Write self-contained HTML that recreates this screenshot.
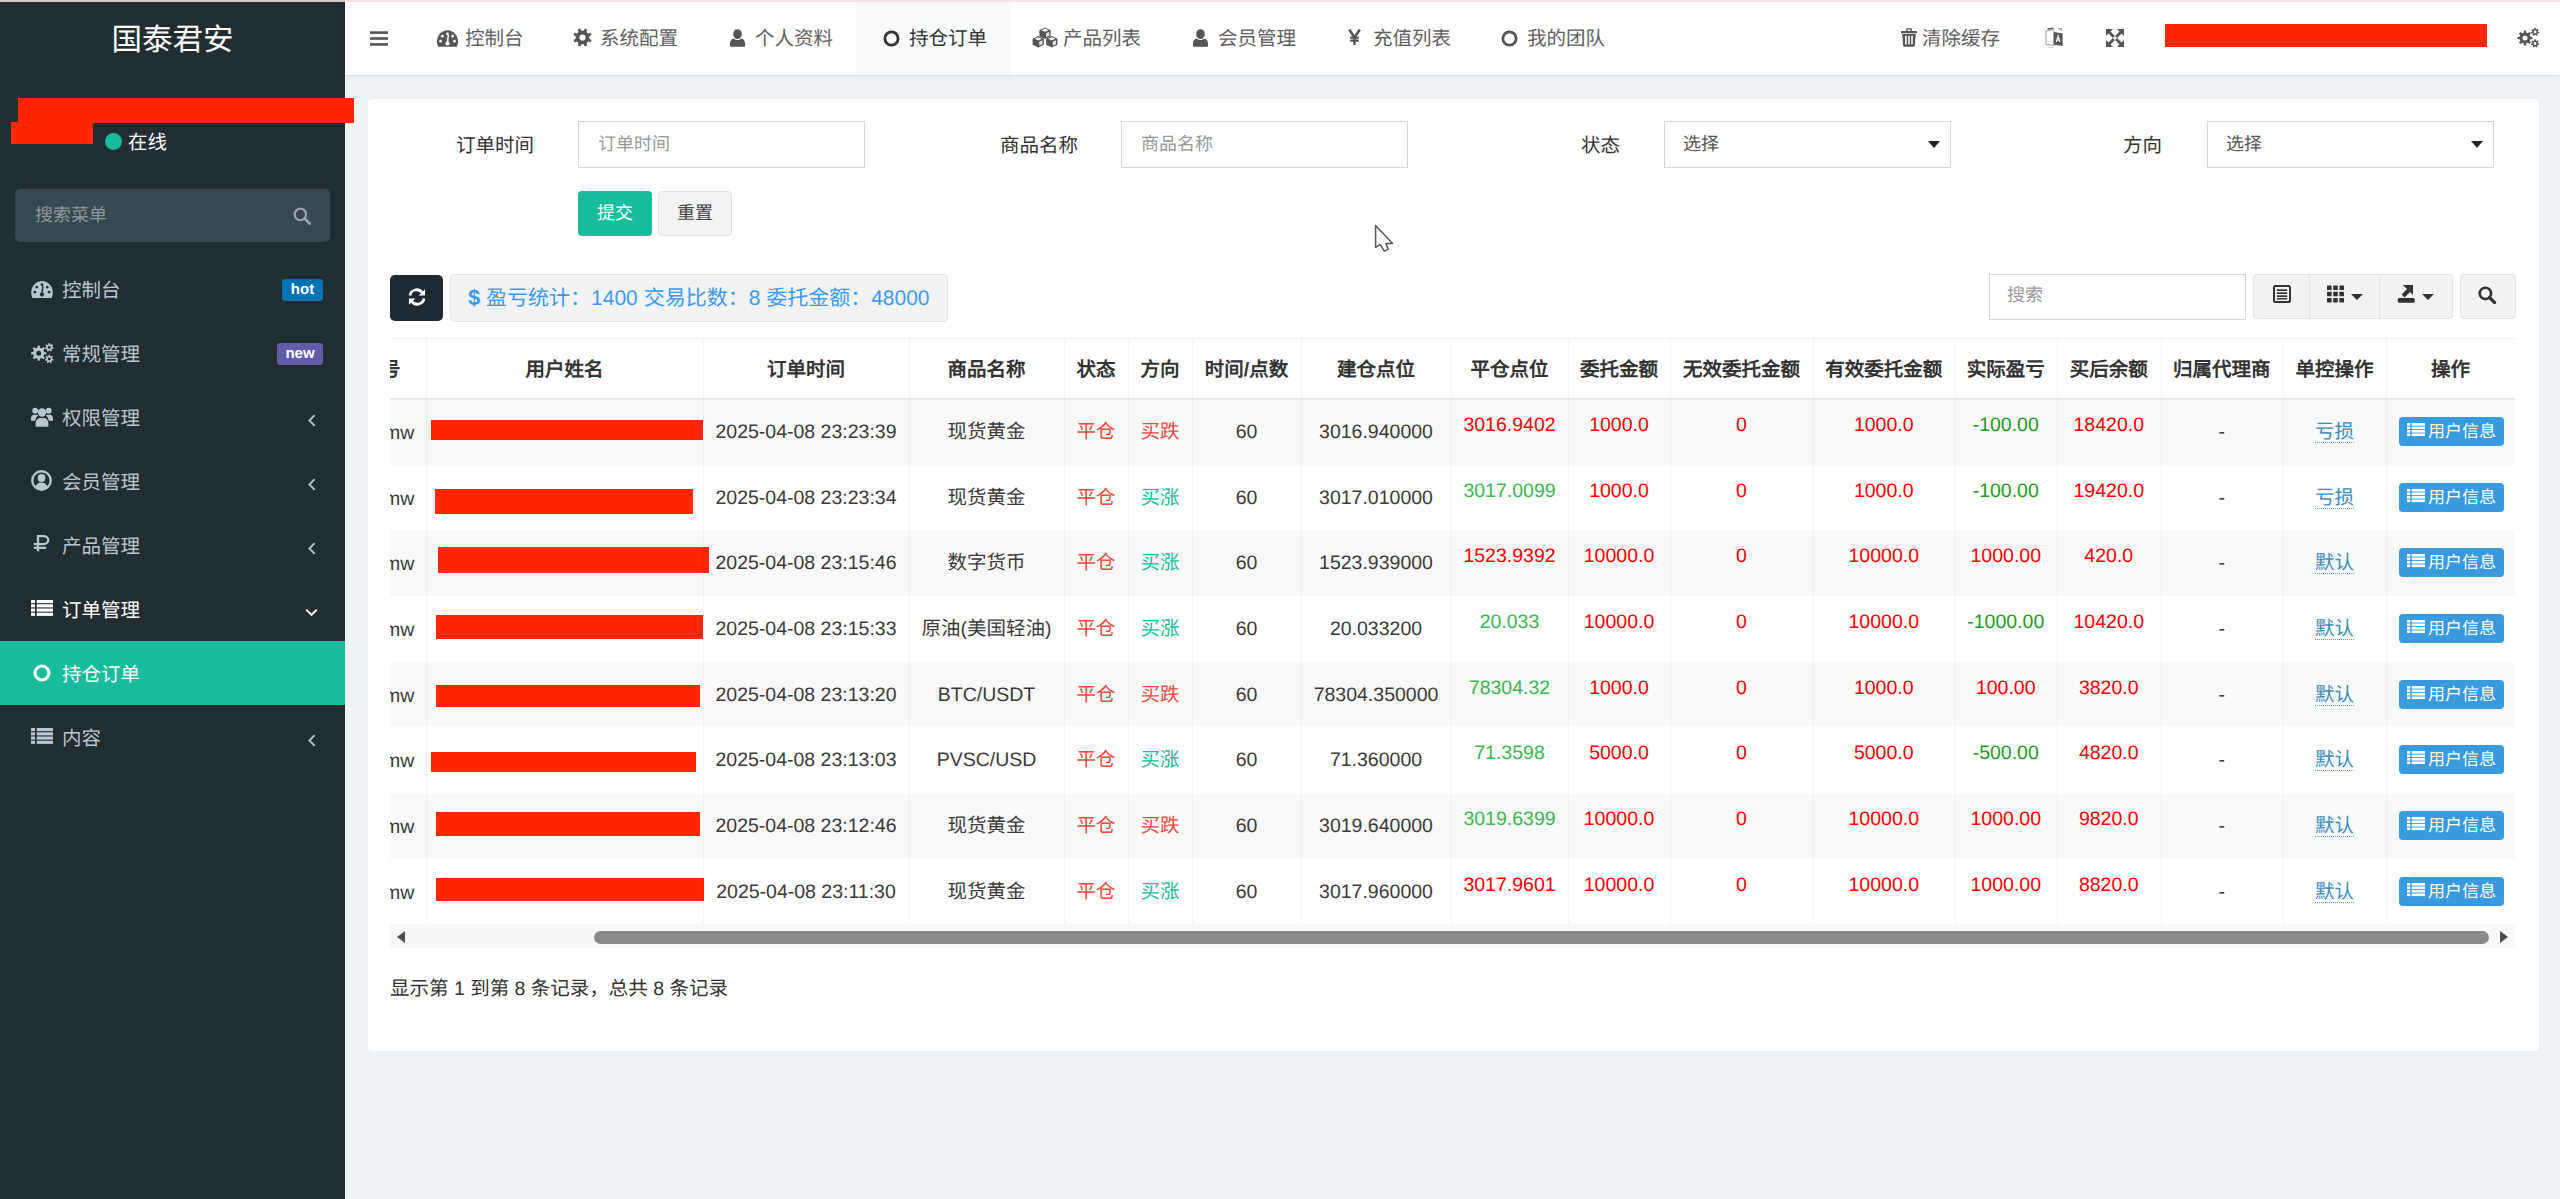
<!DOCTYPE html>
<html lang="zh-CN">
<head>
<meta charset="utf-8">
<style>
*{box-sizing:border-box}
html,body{margin:0;padding:0}
body{width:2560px;height:1199px;overflow:hidden;position:relative;background:#eff3f6;font-family:"Liberation Sans",sans-serif;color:#333;text-rendering:geometricPrecision}
.a{position:absolute;white-space:nowrap}
svg{display:block}
.mt{font-size:19.5px;color:#b8c7ce;line-height:26px}
.nv{font-size:19.5px;color:#606060;line-height:26px}
.lbl{font-size:19.5px;color:#333;line-height:26px}
.inp{background:#fff;border:1px solid #d2d6de}
.ph{font-size:18px;color:#999;line-height:26px}
.btn{font-size:18px;line-height:43px;text-align:center}
.stat{font-size:21px;color:#3a9af2;line-height:26px}
.th{font-size:19.5px;font-weight:bold;color:#333;line-height:26px}
.td{font-size:19.5px;color:#3a3a3a;line-height:26px}
.lnk{color:#3c8dbc}
.lnk span{display:inline-block;line-height:20px;border-bottom:1.5px dotted #5aa0d0}
.ubtn{width:105px;height:29px;background:#3a9ade;border-radius:4px;color:#fff;font-size:17px;line-height:29px;padding-left:8px}
.foot{font-size:19.5px;color:#333;line-height:26px}
</style>
</head>
<body>
<div class="a" style="left:0;top:0;width:345px;height:1199px;background:#222d32"></div>
<div class="a" style="left:0;top:0;width:2560px;height:2px;background:#f6e3e3;z-index:5"></div>
<div class="a" style="left:0;top:0;width:345px;height:2px;background:#d6c8c6;z-index:6"></div>
<div class="a" style="left:0;top:20px;width:345px;line-height:40px;text-align:center;color:#fff;font-size:30.5px">国泰君安</div>
<div class="a" style="left:18px;top:98px;width:336px;height:25px;background:#ff2600;z-index:3"></div>
<div class="a" style="left:11px;top:122px;width:82px;height:22px;background:#ff2600"></div>
<div class="a" style="left:105px;top:133px;width:17px;height:17px;border-radius:50%;background:#18bc9c"></div>
<div class="a mt" style="left:128px;top:129.5px;color:#fff">在线</div>
<div class="a" style="left:15px;top:189px;width:315px;height:53px;border-radius:5px;background:#374850"></div>
<div class="a" style="left:35px;top:202px;line-height:26px;font-size:18px;color:#8d979b">搜索菜单</div>
<svg class="a" style="left:293px;top:207px" width="18" height="18" viewBox="0 0 18 18"><circle cx="7.4" cy="7.4" r="5.7" fill="none" stroke="#9aa3a7" stroke-width="2.2"/><path d="M11.6 11.6L16.6 16.6" stroke="#9aa3a7" stroke-width="2.8000000000000003" stroke-linecap="round"/></svg>
<svg class="a" style="left:31px;top:281px" width="22" height="17" viewBox="0 0 21.2 16.7"><path d="M1.2 16.7C.5 15.2 0 13.4 0 11.4 0 5.1 4.7 0 10.6 0S21.2 5.1 21.2 11.4c0 2-.5 3.8-1.2 5.3z" fill="#b8c7ce"/><g fill="#222d32"><circle cx="3.6" cy="11" r="1.35"/><circle cx="5.4" cy="6" r="1.35"/><circle cx="10.6" cy="3.6" r="1.35"/><circle cx="15.8" cy="6" r="1.35"/><circle cx="17.6" cy="11" r="1.35"/><circle cx="10.6" cy="13.3" r="2.1"/></g><path d="M11.4 4.8L10.6 13" stroke="#222d32" stroke-width="1.5"/></svg>
<div class="a mt" style="left:62px;top:calc(257px + 20.5px);color:#b8c7ce">控制台</div>
<div class="a" style="left:282px;top:279px;width:41px;height:22px;border-radius:3px;background:#0073b7;color:#fff;font-size:15px;font-weight:bold;line-height:22px;text-align:center">hot</div>
<svg class="a" style="left:31px;top:343px" width="23" height="21" viewBox="0 0 23 21"><path fill-rule="evenodd" d="M13.16 8.94L15.33 9.17L15.33 11.23L13.16 11.46L12.45 13.16L13.82 14.87L12.37 16.32L10.66 14.95L8.96 15.66L8.73 17.83L6.67 17.83L6.44 15.66L4.74 14.95L3.03 16.32L1.58 14.87L2.95 13.16L2.24 11.46L0.07 11.23L0.07 9.17L2.24 8.94L2.95 7.24L1.58 5.53L3.03 4.08L4.74 5.45L6.44 4.74L6.67 2.57L8.73 2.57L8.96 4.74L10.66 5.45L12.37 4.08L13.82 5.53L12.45 7.24ZM10.20 10.20A2.5 2.5 0 1 0 5.20 10.20A2.5 2.5 0 1 0 10.20 10.20ZM21.39 4.17L22.70 4.55L22.41 5.97L21.06 5.81L20.41 6.67L20.93 7.93L19.63 8.59L18.91 7.44L17.83 7.46L17.18 8.65L15.85 8.06L16.31 6.77L15.61 5.95L14.27 6.17L13.92 4.76L15.20 4.32L15.42 3.26L14.40 2.36L15.28 1.20L16.43 1.93L17.39 1.44L17.47 0.08L18.92 0.04L19.07 1.40L20.05 1.84L21.16 1.06L22.09 2.17L21.13 3.13ZM19.75 4.40A1.45 1.45 0 1 0 16.85 4.40A1.45 1.45 0 1 0 19.75 4.40ZM21.39 15.77L22.70 16.15L22.41 17.57L21.06 17.41L20.41 18.27L20.93 19.53L19.63 20.19L18.91 19.04L17.83 19.06L17.18 20.25L15.85 19.66L16.31 18.37L15.61 17.55L14.27 17.77L13.92 16.36L15.20 15.92L15.42 14.86L14.40 13.96L15.28 12.80L16.43 13.53L17.39 13.04L17.47 11.68L18.92 11.64L19.07 13.00L20.05 13.44L21.16 12.66L22.09 13.77L21.13 14.73ZM19.75 16.00A1.45 1.45 0 1 0 16.85 16.00A1.45 1.45 0 1 0 19.75 16.00Z" fill="#b8c7ce"/></svg>
<div class="a mt" style="left:62px;top:calc(321px + 20.5px);color:#b8c7ce">常规管理</div>
<div class="a" style="left:277px;top:343px;width:46px;height:22px;border-radius:3px;background:#605ca8;color:#fff;font-size:15px;font-weight:bold;line-height:22px;text-align:center">new</div>
<svg class="a" style="left:31px;top:407px" width="22" height="20" viewBox="0 0 22 19.5"><g fill="#b8c7ce"><circle cx="11" cy="5.2" r="4.2"/><path d="M4.6 19.5v-3.2c0-3.4 2.3-5.6 5-5.6h2.8c2.7 0 5 2.2 5 5.6v3.2z"/><circle cx="4.2" cy="3.4" r="2.9"/><circle cx="17.8" cy="3.4" r="2.9"/><path d="M0 13.5v-2.2c0-2.3 1.3-3.8 3.2-3.8h2.2c.7 0 1.3.3 1.7.7-1.6 1.3-2.6 3-2.8 5.3z"/><path d="M22 13.5v-2.2c0-2.3-1.3-3.8-3.2-3.8h-2.2c-.7 0-1.3.3-1.7.7 1.6 1.3 2.6 3 2.8 5.3z"/></g></svg>
<div class="a mt" style="left:62px;top:calc(385px + 20.5px);color:#b8c7ce">权限管理</div>
<svg class="a" style="left:307px;top:414px" width="10" height="13" viewBox="0 0 10 13"><path d="M7.6 1.2L2.4 6.5L7.6 11.8" fill="none" stroke="#b8c7ce" stroke-width="1.9"/></svg>
<svg class="a" style="left:31px;top:470px" width="21" height="21" viewBox="0 0 21 21"><circle cx="10.5" cy="10.5" r="9.2" fill="none" stroke="#b8c7ce" stroke-width="2.4"/><circle cx="10.5" cy="8" r="3.9" fill="#b8c7ce"/><path d="M4.2 17.2c.9-2.9 3.2-4.7 6.3-4.7s5.4 1.8 6.3 4.7c-1.6 1.6-3.8 2.5-6.3 2.5s-4.7-.9-6.3-2.5z" fill="#b8c7ce"/></svg>
<div class="a mt" style="left:62px;top:calc(449px + 20.5px);color:#b8c7ce">会员管理</div>
<svg class="a" style="left:307px;top:478px" width="10" height="13" viewBox="0 0 10 13"><path d="M7.6 1.2L2.4 6.5L7.6 11.8" fill="none" stroke="#b8c7ce" stroke-width="1.9"/></svg>
<svg class="a" style="left:28px;top:530px" width="27" height="28" viewBox="0 0 27 28"><path d="M10 21.2V6.1H15.2C18.3 6.1 20.3 7.9 20.3 10.1S18.3 14.2 15.2 14.2H5.8M5.8 17.9H18.2" fill="none" stroke="#b8c7ce" stroke-width="2.3"/></svg>
<div class="a mt" style="left:62px;top:calc(513px + 20.5px);color:#b8c7ce">产品管理</div>
<svg class="a" style="left:307px;top:542px" width="10" height="13" viewBox="0 0 10 13"><path d="M7.6 1.2L2.4 6.5L7.6 11.8" fill="none" stroke="#b8c7ce" stroke-width="1.9"/></svg>
<svg class="a" style="left:31px;top:600px" width="22" height="17" viewBox="0 0 22 17"><g fill="#fff"><rect x="0" y="0.00" width="3.96" height="3.15"/><rect x="5.72" y="0.00" width="16.28" height="3.15"/><rect x="0" y="4.25" width="3.96" height="3.15"/><rect x="5.72" y="4.25" width="16.28" height="3.15"/><rect x="0" y="8.50" width="3.96" height="3.15"/><rect x="5.72" y="8.50" width="16.28" height="3.15"/><rect x="0" y="12.75" width="3.96" height="3.15"/><rect x="5.72" y="12.75" width="16.28" height="3.15"/></g></svg>
<div class="a mt" style="left:62px;top:calc(577px + 20.5px);color:#fff">订单管理</div>
<svg class="a" style="left:305px;top:608px" width="13" height="9" viewBox="0 0 13 9"><path d="M1.2 1.6L6.5 6.8L11.8 1.6" fill="none" stroke="#fff" stroke-width="1.9"/></svg>
<div class="a" style="left:0;top:641px;width:345px;height:64px;background:#18bc9c"></div>
<svg class="a" style="left:33px;top:664px" width="18" height="18" viewBox="0 0 17 17"><circle cx="8.5" cy="8.5" r="6.6" fill="none" stroke="#fff" stroke-width="2.9"/></svg>
<div class="a mt" style="left:62px;top:calc(641px + 20.5px);color:#fff">持仓订单</div>
<svg class="a" style="left:31px;top:728px" width="22" height="17" viewBox="0 0 22 17"><g fill="#b8c7ce"><rect x="0" y="0.00" width="3.96" height="3.15"/><rect x="5.72" y="0.00" width="16.28" height="3.15"/><rect x="0" y="4.25" width="3.96" height="3.15"/><rect x="5.72" y="4.25" width="16.28" height="3.15"/><rect x="0" y="8.50" width="3.96" height="3.15"/><rect x="5.72" y="8.50" width="16.28" height="3.15"/><rect x="0" y="12.75" width="3.96" height="3.15"/><rect x="5.72" y="12.75" width="16.28" height="3.15"/></g></svg>
<div class="a mt" style="left:62px;top:calc(705px + 20.5px);color:#b8c7ce">内容</div>
<svg class="a" style="left:307px;top:734px" width="10" height="13" viewBox="0 0 10 13"><path d="M7.6 1.2L2.4 6.5L7.6 11.8" fill="none" stroke="#b8c7ce" stroke-width="1.9"/></svg>
<div class="a" style="left:345px;top:0;width:2215px;height:75px;background:#fff;box-shadow:0 1px 1px rgba(0,0,0,.06),0 2px 5px rgba(0,0,0,.04)"></div>
<div class="a" style="left:856px;top:2px;width:155px;height:73px;background:#f9fafb"></div>
<svg class="a" style="left:370px;top:31px" width="18" height="15" viewBox="0 0 18 15"><g fill="#555"><rect x="0" y="0.3" width="18" height="2.6"/><rect x="0" y="6.2" width="18" height="2.6"/><rect x="0" y="12.1" width="18" height="2.6"/></g></svg>
<svg class="a" style="left:437px;top:30px" width="21" height="17" viewBox="0 0 21.2 16.7"><path d="M1.2 16.7C.5 15.2 0 13.4 0 11.4 0 5.1 4.7 0 10.6 0S21.2 5.1 21.2 11.4c0 2-.5 3.8-1.2 5.3z" fill="#555"/><g fill="#fff"><circle cx="3.6" cy="11" r="1.35"/><circle cx="5.4" cy="6" r="1.35"/><circle cx="10.6" cy="3.6" r="1.35"/><circle cx="15.8" cy="6" r="1.35"/><circle cx="17.6" cy="11" r="1.35"/><circle cx="10.6" cy="13.3" r="2.1"/></g><path d="M11.4 4.8L10.6 13" stroke="#fff" stroke-width="1.5"/></svg>
<div class="a nv" style="left:465px;top:26px">控制台</div>
<svg class="a" style="left:573px;top:28px" width="19" height="19" viewBox="0 0 19 19"><path fill-rule="evenodd" d="M16.31 10.63L18.49 11.88L17.54 14.17L15.11 13.51L13.51 15.11L14.17 17.54L11.88 18.49L10.63 16.31L8.37 16.31L7.12 18.49L4.83 17.54L5.49 15.11L3.89 13.51L1.46 14.17L0.51 11.88L2.69 10.63L2.69 8.37L0.51 7.12L1.46 4.83L3.89 5.49L5.49 3.89L4.83 1.46L7.12 0.51L8.37 2.69L10.63 2.69L11.88 0.51L14.17 1.46L13.51 3.89L15.11 5.49L17.54 4.83L18.49 7.12L16.31 8.37ZM12.60 9.50A3.1 3.1 0 1 0 6.40 9.50A3.1 3.1 0 1 0 12.60 9.50Z" fill="#555"/></svg>
<div class="a nv" style="left:600px;top:26px">系统配置</div>
<svg class="a" style="left:730px;top:29px" width="15" height="18" viewBox="0 0 15 18"><g fill="#555"><path d="M7.5 0.2c2.5 0 4.3 2.1 4.3 4.7s-1.8 5-4.3 5-4.3-2.4-4.3-5S5 .2 7.5.2z"/><path d="M0 17.8v-3.2c0-2.9 1.5-4.9 3.6-5.2.9.9 2.3 1.5 3.9 1.5s3-.6 3.9-1.5c2.1.3 3.6 2.3 3.6 5.2v3.2z"/></g></svg>
<div class="a nv" style="left:755px;top:26px">个人资料</div>
<svg class="a" style="left:883px;top:30px" width="17" height="17" viewBox="0 0 17 17"><circle cx="8.5" cy="8.5" r="6.6" fill="none" stroke="#333" stroke-width="2.8"/></svg>
<div class="a nv" style="left:909px;top:26px;color:#333">持仓订单</div>
<svg class="a" style="left:1032px;top:27px" width="26" height="21" viewBox="0 0 25.4 20"><path d="M7.2 2.8000000000000003L12.7 0.2L18.2 2.8000000000000003V8.799999999999999L12.7 11.399999999999999L7.2 8.799999999999999Z" fill="#555"/><path d="M9.2 2.9000000000000004L12.7 1.3L16.2 2.9000000000000004L12.7 4.5Z" fill="#fff"/><path d="M13.7 5.8L16.8 4.4V8.2L13.7 9.6Z" fill="#fff" opacity=".85"/><path d="M0.6 11.2L6.1 8.6L11.6 11.2V17.2L6.1 19.799999999999997L0.6 17.2Z" fill="#555"/><path d="M2.6 11.3L6.1 9.7L9.6 11.3L6.1 12.899999999999999Z" fill="#fff"/><path d="M7.1 14.2L10.2 12.8V16.6L7.1 18.0Z" fill="#fff" opacity=".85"/><path d="M13.8 11.2L19.3 8.6L24.8 11.2V17.2L19.3 19.799999999999997L13.8 17.2Z" fill="#555"/><path d="M15.8 11.3L19.3 9.7L22.8 11.3L19.3 12.899999999999999Z" fill="#fff"/><path d="M20.3 14.2L23.4 12.8V16.6L20.3 18.0Z" fill="#fff" opacity=".85"/></svg>
<div class="a nv" style="left:1063px;top:26px">产品列表</div>
<svg class="a" style="left:1193px;top:29px" width="15" height="18" viewBox="0 0 15 18"><g fill="#555"><path d="M7.5 0.2c2.5 0 4.3 2.1 4.3 4.7s-1.8 5-4.3 5-4.3-2.4-4.3-5S5 .2 7.5.2z"/><path d="M0 17.8v-3.2c0-2.9 1.5-4.9 3.6-5.2.9.9 2.3 1.5 3.9 1.5s3-.6 3.9-1.5c2.1.3 3.6 2.3 3.6 5.2v3.2z"/></g></svg>
<div class="a nv" style="left:1218px;top:26px">会员管理</div>
<svg class="a" style="left:1348px;top:29px" width="13" height="16" viewBox="0 0 13 16"><path d="M1.2 .6L6.5 8.4L11.8 .6" fill="none" stroke="#555" stroke-width="2.6"/><path d="M6.5 8V16M2.2 8.6h8.6M2.2 11.6h8.6" stroke="#555" stroke-width="2.4"/></svg>
<div class="a nv" style="left:1373px;top:26px">充值列表</div>
<svg class="a" style="left:1501px;top:30px" width="17" height="17" viewBox="0 0 17 17"><circle cx="8.5" cy="8.5" r="6.6" fill="none" stroke="#555" stroke-width="2.8"/></svg>
<div class="a nv" style="left:1527px;top:26px">我的团队</div>
<svg class="a" style="left:1901px;top:28px" width="16" height="19" viewBox="0 0 15.5 18"><g fill="#555"><rect x="0" y="2.6" width="15.5" height="2.2" rx=".5"/><path d="M5 2.8V.9C5 .4 5.4 0 5.9 0h3.7c.5 0 .9.4.9.9v1.9H9.2V1.3H6.3v1.5z"/><path d="M1.2 5.6h13.1l-.9 11.4c-.1.6-.5 1-1.1 1H3.2c-.6 0-1-.4-1.1-1z"/></g><g fill="#fff"><rect x="4.1" y="7.3" width="1.5" height="8.4"/><rect x="7" y="7.3" width="1.5" height="8.4"/><rect x="9.9" y="7.3" width="1.5" height="8.4"/></g></svg>
<div class="a nv" style="left:1922px;top:26px">清除缓存</div>
<svg class="a" style="left:2045px;top:27px" width="18" height="21" viewBox="0 0 18 20"><path d="M1 3.5L8.8 2.3V18L1 17z" fill="none" stroke="#bbb" stroke-width="1.4"/><path d="M2.5 1.5L8.5 .8" stroke="#555" stroke-width="1.6"/><path d="M13.5 1.2h3" stroke="#999" stroke-width="1.4"/><path d="M16.2 .5v3" stroke="#999" stroke-width="1.2"/><path d="M8.8 4.5L17.6 6V18.6L8.8 17.2z" fill="#555"/><path d="M11.3 14.5l1.8-6 1.8 6M11.9 12.5h2.4" stroke="#fff" stroke-width="1.2" fill="none"/><path d="M3 19.5c1.5.6 3.5.7 5.5.2" stroke="#ccc" stroke-width="1" fill="none"/></svg>
<svg class="a" style="left:2106px;top:29px" width="18" height="18" viewBox="0 0 17.5 17.5"><g fill="#555"><path d="M0 0h6.8L4.4 2.4l4.3 4.3-2 2-4.3-4.3L0 6.8z"/><path d="M17.5 0v6.8l-2.4-2.4-4.3 4.3-2-2 4.3-4.3L10.7 0z"/><path d="M0 17.5v-6.8l2.4 2.4 4.3-4.3 2 2-4.3 4.3 2.4 2.4z"/><path d="M17.5 17.5h-6.8l2.4-2.4-4.3-4.3 2-2 4.3 4.3 2.4-2.4z"/></g></svg>
<div class="a" style="left:2165px;top:24px;width:322px;height:23px;background:#ff2600"></div>
<svg class="a" style="left:2516px;top:27px" width="24" height="21" viewBox="0 0 23 21"><path fill-rule="evenodd" d="M13.86 9.76L16.03 9.99L16.03 12.01L13.86 12.24L13.17 13.91L14.54 15.61L13.11 17.04L11.41 15.67L9.74 16.36L9.51 18.53L7.49 18.53L7.26 16.36L5.59 15.67L3.89 17.04L2.46 15.61L3.83 13.91L3.14 12.24L0.97 12.01L0.97 9.99L3.14 9.76L3.83 8.09L2.46 6.39L3.89 4.96L5.59 6.33L7.26 5.64L7.49 3.47L9.51 3.47L9.74 5.64L11.41 6.33L13.11 4.96L14.54 6.39L13.17 8.09ZM11.00 11.00A2.5 2.5 0 1 0 6.00 11.00A2.5 2.5 0 1 0 11.00 11.00ZM21.59 4.78L22.80 5.14L22.52 6.50L21.27 6.37L20.64 7.20L21.11 8.37L19.87 9.00L19.19 7.94L18.15 7.97L17.53 9.06L16.26 8.49L16.67 7.30L16.00 6.50L14.76 6.69L14.41 5.35L15.60 4.93L15.81 3.90L14.88 3.05L15.72 1.94L16.79 2.61L17.72 2.13L17.80 0.88L19.19 0.84L19.34 2.09L20.29 2.52L21.33 1.81L22.22 2.87L21.33 3.77ZM20.05 5.00A1.45 1.45 0 1 0 17.15 5.00A1.45 1.45 0 1 0 20.05 5.00ZM21.59 16.28L22.80 16.64L22.52 18.00L21.27 17.87L20.64 18.70L21.11 19.87L19.87 20.50L19.19 19.44L18.15 19.47L17.53 20.56L16.26 19.99L16.67 18.80L16.00 18.00L14.76 18.19L14.41 16.85L15.60 16.43L15.81 15.40L14.88 14.55L15.72 13.44L16.79 14.11L17.72 13.63L17.80 12.38L19.19 12.34L19.34 13.59L20.29 14.02L21.33 13.31L22.22 14.37L21.33 15.27ZM20.05 16.50A1.45 1.45 0 1 0 17.15 16.50A1.45 1.45 0 1 0 20.05 16.50Z" fill="#555"/></svg>
<div class="a" style="left:368px;top:99px;width:2171px;height:952px;background:#fff;border-radius:4px"></div>
<div class="a lbl" style="left:334px;top:133px;width:200px;text-align:right">订单时间</div>
<div class="a inp" style="left:578px;top:121px;width:287px;height:47px"></div>
<div class="a lbl" style="left:878px;top:133px;width:200px;text-align:right">商品名称</div>
<div class="a inp" style="left:1121px;top:121px;width:287px;height:47px"></div>
<div class="a lbl" style="left:1420px;top:133px;width:200px;text-align:right">状态</div>
<div class="a inp" style="left:1664px;top:121px;width:287px;height:47px"></div>
<div class="a lbl" style="left:1962px;top:133px;width:200px;text-align:right">方向</div>
<div class="a inp" style="left:2207px;top:121px;width:287px;height:47px"></div>
<div class="a ph" style="left:598px;top:131px">订单时间</div>
<div class="a ph" style="left:1141px;top:131px">商品名称</div>
<div class="a ph" style="left:1683px;top:131px;color:#555">选择</div>
<div class="a ph" style="left:2226px;top:131px;color:#555">选择</div>
<div class="a" style="left:1928px;top:141px;width:0;height:0;border-left:6px solid transparent;border-right:6px solid transparent;border-top:7px solid #222"></div>
<div class="a" style="left:2471px;top:141px;width:0;height:0;border-left:6px solid transparent;border-right:6px solid transparent;border-top:7px solid #222"></div>
<div class="a btn" style="left:578px;top:191px;width:74px;height:45px;background:#18bc9c;color:#fff;border-radius:4px;line-height:45px">提交</div>
<div class="a btn" style="left:658px;top:191px;width:74px;height:45px;background:#f4f4f4;color:#444;border:1px solid #e2e2e2;border-radius:4px">重置</div>
<svg class="a" style="left:1374px;top:224px" width="21" height="30" viewBox="0 0 21 30"><path d="M1.6 1.6V23.4L6.2 20.6L10.3 27.2L14.2 25.3L11.9 19.6H18.6Z" fill="#fff" stroke="#555" stroke-width="1.5" stroke-linejoin="round"/></svg>
<div class="a" style="left:390px;top:275px;width:53px;height:46px;background:#1e2932;border-radius:5px"></div>
<svg class="a" style="left:408px;top:288px" width="18" height="18" viewBox="0 0 17.5 17.5"><path d="M1.9 7.2A6.6 6.6 0 0 1 13.6 4.3M15.6 10.3A6.6 6.6 0 0 1 3.9 13.2" fill="none" stroke="#fff" stroke-width="2.7"/><path d="M16.6 1.2V7.4H10.4Z" fill="#fff"/><path d="M0.9 16.3V10.1H7.1Z" fill="#fff"/></svg>
<div class="a" style="left:450px;top:274px;width:498px;height:48px;background:#f3f3f3;border:1px solid #e6e6e6;border-radius:4px"></div>
<div class="a stat" style="left:468px;top:285px"><b style="font-size:22px">$</b> 盈亏统计：1400 交易比数：8 委托金额：48000</div>
<div class="a inp" style="left:1989px;top:274px;width:257px;height:46px"></div>
<div class="a ph" style="left:2007px;top:282px">搜索</div>
<div class="a" style="left:2253px;top:274px;width:200px;height:45px;background:#f3f3f3;border:1px solid #e4e4e4;border-radius:4px"></div>
<div class="a" style="left:2309px;top:275px;width:1px;height:43px;background:#e2e2e2"></div>
<div class="a" style="left:2379px;top:275px;width:1px;height:43px;background:#e2e2e2"></div>
<div class="a" style="left:2460px;top:274px;width:56px;height:45px;background:#f3f3f3;border:1px solid #e4e4e4;border-radius:4px"></div>
<svg class="a" style="left:2273px;top:285px" width="18" height="18" viewBox="0 0 18 18"><rect x="1" y="1" width="16" height="16" rx="1.5" fill="none" stroke="#333" stroke-width="2"/><g fill="#333"><rect x="3.8" y="4.3" width="10.4" height="1.7"/><rect x="3.8" y="7.3" width="10.4" height="1.7"/><rect x="3.8" y="10.3" width="10.4" height="1.7"/><rect x="3.8" y="13" width="10.4" height="1.5"/></g></svg>
<svg class="a" style="left:2327px;top:285px" width="17" height="18" viewBox="0 0 17 18"><g fill="#333"><rect x="0" y="0.5" width="4.6" height="4.6" rx=".6"/><rect x="0" y="6.7" width="4.6" height="4.6" rx=".6"/><rect x="0" y="12.9" width="4.6" height="4.6" rx=".6"/><rect x="6.2" y="0.5" width="4.6" height="4.6" rx=".6"/><rect x="6.2" y="6.7" width="4.6" height="4.6" rx=".6"/><rect x="6.2" y="12.9" width="4.6" height="4.6" rx=".6"/><rect x="12.4" y="0.5" width="4.6" height="4.6" rx=".6"/><rect x="12.4" y="6.7" width="4.6" height="4.6" rx=".6"/><rect x="12.4" y="12.9" width="4.6" height="4.6" rx=".6"/></g></svg>
<div class="a" style="left:2351px;top:294px;width:0;height:0;border-left:6px solid transparent;border-right:6px solid transparent;border-top:6px solid #333"></div>
<svg class="a" style="left:2397px;top:284px" width="18" height="19" viewBox="0 0 18 19"><g fill="#333"><rect x="0.75" y="14" width="17" height="4.75" rx="1.6"/><path d="M6 1H16V11L13 8L7.6 13.4L4.6 10.4L10 5Z"/></g></svg>
<div class="a" style="left:2422px;top:294px;width:0;height:0;border-left:6px solid transparent;border-right:6px solid transparent;border-top:6px solid #333"></div>
<svg class="a" style="left:2478px;top:286px" width="19" height="18" viewBox="0 0 19 18"><circle cx="7.4" cy="7.4" r="5.7" fill="none" stroke="#333" stroke-width="2.6"/><path d="M11.6 11.6L16.6 16.6" stroke="#333" stroke-width="3.2" stroke-linecap="round"/></svg>
<div class="a" style="left:390px;top:338px;width:2125px;height:1px;background:#f0f0f0"></div>
<div class="a th" style="left:390px;top:357px;width:36px;height:26px;overflow:hidden"><span style="position:absolute;left:-9px;top:0">号</span></div>
<div class="a th" style="left:426px;top:357px;width:277px;text-align:center">用户姓名</div>
<div class="a th" style="left:703px;top:357px;width:206px;text-align:center">订单时间</div>
<div class="a th" style="left:909px;top:357px;width:155px;text-align:center">商品名称</div>
<div class="a th" style="left:1064px;top:357px;width:64px;text-align:center">状态</div>
<div class="a th" style="left:1128px;top:357px;width:64px;text-align:center">方向</div>
<div class="a th" style="left:1192px;top:357px;width:109px;text-align:center">时间/点数</div>
<div class="a th" style="left:1301px;top:357px;width:150px;text-align:center">建仓点位</div>
<div class="a th" style="left:1451px;top:357px;width:117px;text-align:center">平仓点位</div>
<div class="a th" style="left:1568px;top:357px;width:102px;text-align:center">委托金额</div>
<div class="a th" style="left:1670px;top:357px;width:143px;text-align:center">无效委托金额</div>
<div class="a th" style="left:1813px;top:357px;width:141.5px;text-align:center">有效委托金额</div>
<div class="a th" style="left:1954.5px;top:357px;width:102.5px;text-align:center">实际盈亏</div>
<div class="a th" style="left:2057px;top:357px;width:103.5px;text-align:center">买后余额</div>
<div class="a th" style="left:2160.5px;top:357px;width:122.5px;text-align:center">归属代理商</div>
<div class="a th" style="left:2283px;top:357px;width:103px;text-align:center">单控操作</div>
<div class="a th" style="left:2386px;top:357px;width:129px;text-align:center">操作</div>
<div class="a" style="left:390px;top:399px;width:2125px;height:66px;background:#f9f9f9"></div>
<div class="a td" style="left:390px;top:calc(399.00px + 20px);width:36px;height:26px;overflow:hidden"><span style="position:absolute;left:-6px;top:1px">mw</span></div>
<div class="a" style="left:430.8px;top:419.7px;width:272.5px;height:20.0px;background:#ff2600"></div>
<div class="a td" style="left:703px;top:calc(399.00px + 20px);width:206px;text-align:center;">2025-04-08 23:23:39</div>
<div class="a td" style="left:909px;top:calc(399.00px + 20px);width:155px;text-align:center;">现货黄金</div>
<div class="a td" style="left:1064px;top:calc(399.00px + 20px);width:64px;text-align:center;color:#e74c3c;">平仓</div>
<div class="a td" style="left:1128px;top:calc(399.00px + 20px);width:64px;text-align:center;color:#e74c3c;">买跌</div>
<div class="a td" style="left:1192px;top:calc(399.00px + 20px);width:109px;text-align:center;">60</div>
<div class="a td" style="left:1301px;top:calc(399.00px + 20px);width:150px;text-align:center;">3016.940000</div>
<div class="a td" style="left:1451px;top:calc(399.00px + 13px);width:117px;text-align:center;color:#ff0000;">3016.9402</div>
<div class="a td" style="left:1568px;top:calc(399.00px + 13px);width:102px;text-align:center;color:#ff0000;">1000.0</div>
<div class="a td" style="left:1670px;top:calc(399.00px + 13px);width:143px;text-align:center;color:#ff0000;">0</div>
<div class="a td" style="left:1813px;top:calc(399.00px + 13px);width:141.5px;text-align:center;color:#ff0000;">1000.0</div>
<div class="a td" style="left:1954.5px;top:calc(399.00px + 13px);width:102.5px;text-align:center;color:#1f9a1f;">-100.00</div>
<div class="a td" style="left:2057px;top:calc(399.00px + 13px);width:103.5px;text-align:center;color:#ff0000;">18420.0</div>
<div class="a td" style="left:2160.5px;top:calc(399.00px + 20px);width:122.5px;text-align:center;">-</div>
<div class="a td lnk" style="left:2283px;top:calc(399.00px + 20px);width:103px;text-align:center"><span>亏损</span></div>
<div class="a ubtn" style="left:2399px;top:calc(399.00px + 18px)"><svg width="18" height="14" viewBox="0 0 18 14" style="display:inline-block;vertical-align:0;margin-right:3px"><g fill="#fff"><rect x="0" y="0.00" width="3.24" height="2.59"/><rect x="4.68" y="0.00" width="13.32" height="2.59"/><rect x="0" y="3.50" width="3.24" height="2.59"/><rect x="4.68" y="3.50" width="13.32" height="2.59"/><rect x="0" y="7.00" width="3.24" height="2.59"/><rect x="4.68" y="7.00" width="13.32" height="2.59"/><rect x="0" y="10.50" width="3.24" height="2.59"/><rect x="4.68" y="10.50" width="13.32" height="2.59"/></g></svg>用户信息</div>
<div class="a td" style="left:390px;top:calc(464.65px + 20px);width:36px;height:26px;overflow:hidden"><span style="position:absolute;left:-6px;top:1px">mw</span></div>
<div class="a" style="left:434.5px;top:488.8px;width:258.0px;height:25.4px;background:#ff2600"></div>
<div class="a td" style="left:703px;top:calc(464.65px + 20px);width:206px;text-align:center;">2025-04-08 23:23:34</div>
<div class="a td" style="left:909px;top:calc(464.65px + 20px);width:155px;text-align:center;">现货黄金</div>
<div class="a td" style="left:1064px;top:calc(464.65px + 20px);width:64px;text-align:center;color:#e74c3c;">平仓</div>
<div class="a td" style="left:1128px;top:calc(464.65px + 20px);width:64px;text-align:center;color:#18bc9c;">买涨</div>
<div class="a td" style="left:1192px;top:calc(464.65px + 20px);width:109px;text-align:center;">60</div>
<div class="a td" style="left:1301px;top:calc(464.65px + 20px);width:150px;text-align:center;">3017.010000</div>
<div class="a td" style="left:1451px;top:calc(464.65px + 13px);width:117px;text-align:center;color:#3cb554;">3017.0099</div>
<div class="a td" style="left:1568px;top:calc(464.65px + 13px);width:102px;text-align:center;color:#ff0000;">1000.0</div>
<div class="a td" style="left:1670px;top:calc(464.65px + 13px);width:143px;text-align:center;color:#ff0000;">0</div>
<div class="a td" style="left:1813px;top:calc(464.65px + 13px);width:141.5px;text-align:center;color:#ff0000;">1000.0</div>
<div class="a td" style="left:1954.5px;top:calc(464.65px + 13px);width:102.5px;text-align:center;color:#1f9a1f;">-100.00</div>
<div class="a td" style="left:2057px;top:calc(464.65px + 13px);width:103.5px;text-align:center;color:#ff0000;">19420.0</div>
<div class="a td" style="left:2160.5px;top:calc(464.65px + 20px);width:122.5px;text-align:center;">-</div>
<div class="a td lnk" style="left:2283px;top:calc(464.65px + 20px);width:103px;text-align:center"><span>亏损</span></div>
<div class="a ubtn" style="left:2399px;top:calc(464.65px + 18px)"><svg width="18" height="14" viewBox="0 0 18 14" style="display:inline-block;vertical-align:0;margin-right:3px"><g fill="#fff"><rect x="0" y="0.00" width="3.24" height="2.59"/><rect x="4.68" y="0.00" width="13.32" height="2.59"/><rect x="0" y="3.50" width="3.24" height="2.59"/><rect x="4.68" y="3.50" width="13.32" height="2.59"/><rect x="0" y="7.00" width="3.24" height="2.59"/><rect x="4.68" y="7.00" width="13.32" height="2.59"/><rect x="0" y="10.50" width="3.24" height="2.59"/><rect x="4.68" y="10.50" width="13.32" height="2.59"/></g></svg>用户信息</div>
<div class="a" style="left:390px;top:530px;width:2125px;height:66px;background:#f9f9f9"></div>
<div class="a td" style="left:390px;top:calc(530.30px + 20px);width:36px;height:26px;overflow:hidden"><span style="position:absolute;left:-6px;top:1px">mw</span></div>
<div class="a" style="left:438.0px;top:547.0px;width:270.7px;height:25.5px;background:#ff2600"></div>
<div class="a td" style="left:703px;top:calc(530.30px + 20px);width:206px;text-align:center;">2025-04-08 23:15:46</div>
<div class="a td" style="left:909px;top:calc(530.30px + 20px);width:155px;text-align:center;">数字货币</div>
<div class="a td" style="left:1064px;top:calc(530.30px + 20px);width:64px;text-align:center;color:#e74c3c;">平仓</div>
<div class="a td" style="left:1128px;top:calc(530.30px + 20px);width:64px;text-align:center;color:#18bc9c;">买涨</div>
<div class="a td" style="left:1192px;top:calc(530.30px + 20px);width:109px;text-align:center;">60</div>
<div class="a td" style="left:1301px;top:calc(530.30px + 20px);width:150px;text-align:center;">1523.939000</div>
<div class="a td" style="left:1451px;top:calc(530.30px + 13px);width:117px;text-align:center;color:#ff0000;">1523.9392</div>
<div class="a td" style="left:1568px;top:calc(530.30px + 13px);width:102px;text-align:center;color:#ff0000;">10000.0</div>
<div class="a td" style="left:1670px;top:calc(530.30px + 13px);width:143px;text-align:center;color:#ff0000;">0</div>
<div class="a td" style="left:1813px;top:calc(530.30px + 13px);width:141.5px;text-align:center;color:#ff0000;">10000.0</div>
<div class="a td" style="left:1954.5px;top:calc(530.30px + 13px);width:102.5px;text-align:center;color:#ff0000;">1000.00</div>
<div class="a td" style="left:2057px;top:calc(530.30px + 13px);width:103.5px;text-align:center;color:#ff0000;">420.0</div>
<div class="a td" style="left:2160.5px;top:calc(530.30px + 20px);width:122.5px;text-align:center;">-</div>
<div class="a td lnk" style="left:2283px;top:calc(530.30px + 20px);width:103px;text-align:center"><span>默认</span></div>
<div class="a ubtn" style="left:2399px;top:calc(530.30px + 18px)"><svg width="18" height="14" viewBox="0 0 18 14" style="display:inline-block;vertical-align:0;margin-right:3px"><g fill="#fff"><rect x="0" y="0.00" width="3.24" height="2.59"/><rect x="4.68" y="0.00" width="13.32" height="2.59"/><rect x="0" y="3.50" width="3.24" height="2.59"/><rect x="4.68" y="3.50" width="13.32" height="2.59"/><rect x="0" y="7.00" width="3.24" height="2.59"/><rect x="4.68" y="7.00" width="13.32" height="2.59"/><rect x="0" y="10.50" width="3.24" height="2.59"/><rect x="4.68" y="10.50" width="13.32" height="2.59"/></g></svg>用户信息</div>
<div class="a td" style="left:390px;top:calc(595.95px + 20px);width:36px;height:26px;overflow:hidden"><span style="position:absolute;left:-6px;top:1px">mw</span></div>
<div class="a" style="left:436.3px;top:615.3px;width:267.0px;height:23.4px;background:#ff2600"></div>
<div class="a td" style="left:703px;top:calc(595.95px + 20px);width:206px;text-align:center;">2025-04-08 23:15:33</div>
<div class="a td" style="left:909px;top:calc(595.95px + 20px);width:155px;text-align:center;">原油(美国轻油)</div>
<div class="a td" style="left:1064px;top:calc(595.95px + 20px);width:64px;text-align:center;color:#e74c3c;">平仓</div>
<div class="a td" style="left:1128px;top:calc(595.95px + 20px);width:64px;text-align:center;color:#18bc9c;">买涨</div>
<div class="a td" style="left:1192px;top:calc(595.95px + 20px);width:109px;text-align:center;">60</div>
<div class="a td" style="left:1301px;top:calc(595.95px + 20px);width:150px;text-align:center;">20.033200</div>
<div class="a td" style="left:1451px;top:calc(595.95px + 13px);width:117px;text-align:center;color:#3cb554;">20.033</div>
<div class="a td" style="left:1568px;top:calc(595.95px + 13px);width:102px;text-align:center;color:#ff0000;">10000.0</div>
<div class="a td" style="left:1670px;top:calc(595.95px + 13px);width:143px;text-align:center;color:#ff0000;">0</div>
<div class="a td" style="left:1813px;top:calc(595.95px + 13px);width:141.5px;text-align:center;color:#ff0000;">10000.0</div>
<div class="a td" style="left:1954.5px;top:calc(595.95px + 13px);width:102.5px;text-align:center;color:#1f9a1f;">-1000.00</div>
<div class="a td" style="left:2057px;top:calc(595.95px + 13px);width:103.5px;text-align:center;color:#ff0000;">10420.0</div>
<div class="a td" style="left:2160.5px;top:calc(595.95px + 20px);width:122.5px;text-align:center;">-</div>
<div class="a td lnk" style="left:2283px;top:calc(595.95px + 20px);width:103px;text-align:center"><span>默认</span></div>
<div class="a ubtn" style="left:2399px;top:calc(595.95px + 18px)"><svg width="18" height="14" viewBox="0 0 18 14" style="display:inline-block;vertical-align:0;margin-right:3px"><g fill="#fff"><rect x="0" y="0.00" width="3.24" height="2.59"/><rect x="4.68" y="0.00" width="13.32" height="2.59"/><rect x="0" y="3.50" width="3.24" height="2.59"/><rect x="4.68" y="3.50" width="13.32" height="2.59"/><rect x="0" y="7.00" width="3.24" height="2.59"/><rect x="4.68" y="7.00" width="13.32" height="2.59"/><rect x="0" y="10.50" width="3.24" height="2.59"/><rect x="4.68" y="10.50" width="13.32" height="2.59"/></g></svg>用户信息</div>
<div class="a" style="left:390px;top:662px;width:2125px;height:65px;background:#f9f9f9"></div>
<div class="a td" style="left:390px;top:calc(661.60px + 20px);width:36px;height:26px;overflow:hidden"><span style="position:absolute;left:-6px;top:1px">mw</span></div>
<div class="a" style="left:436.3px;top:685.0px;width:263.4px;height:21.7px;background:#ff2600"></div>
<div class="a td" style="left:703px;top:calc(661.60px + 20px);width:206px;text-align:center;">2025-04-08 23:13:20</div>
<div class="a td" style="left:909px;top:calc(661.60px + 20px);width:155px;text-align:center;">BTC/USDT</div>
<div class="a td" style="left:1064px;top:calc(661.60px + 20px);width:64px;text-align:center;color:#e74c3c;">平仓</div>
<div class="a td" style="left:1128px;top:calc(661.60px + 20px);width:64px;text-align:center;color:#e74c3c;">买跌</div>
<div class="a td" style="left:1192px;top:calc(661.60px + 20px);width:109px;text-align:center;">60</div>
<div class="a td" style="left:1301px;top:calc(661.60px + 20px);width:150px;text-align:center;">78304.350000</div>
<div class="a td" style="left:1451px;top:calc(661.60px + 13px);width:117px;text-align:center;color:#3cb554;">78304.32</div>
<div class="a td" style="left:1568px;top:calc(661.60px + 13px);width:102px;text-align:center;color:#ff0000;">1000.0</div>
<div class="a td" style="left:1670px;top:calc(661.60px + 13px);width:143px;text-align:center;color:#ff0000;">0</div>
<div class="a td" style="left:1813px;top:calc(661.60px + 13px);width:141.5px;text-align:center;color:#ff0000;">1000.0</div>
<div class="a td" style="left:1954.5px;top:calc(661.60px + 13px);width:102.5px;text-align:center;color:#ff0000;">100.00</div>
<div class="a td" style="left:2057px;top:calc(661.60px + 13px);width:103.5px;text-align:center;color:#ff0000;">3820.0</div>
<div class="a td" style="left:2160.5px;top:calc(661.60px + 20px);width:122.5px;text-align:center;">-</div>
<div class="a td lnk" style="left:2283px;top:calc(661.60px + 20px);width:103px;text-align:center"><span>默认</span></div>
<div class="a ubtn" style="left:2399px;top:calc(661.60px + 18px)"><svg width="18" height="14" viewBox="0 0 18 14" style="display:inline-block;vertical-align:0;margin-right:3px"><g fill="#fff"><rect x="0" y="0.00" width="3.24" height="2.59"/><rect x="4.68" y="0.00" width="13.32" height="2.59"/><rect x="0" y="3.50" width="3.24" height="2.59"/><rect x="4.68" y="3.50" width="13.32" height="2.59"/><rect x="0" y="7.00" width="3.24" height="2.59"/><rect x="4.68" y="7.00" width="13.32" height="2.59"/><rect x="0" y="10.50" width="3.24" height="2.59"/><rect x="4.68" y="10.50" width="13.32" height="2.59"/></g></svg>用户信息</div>
<div class="a td" style="left:390px;top:calc(727.25px + 20px);width:36px;height:26px;overflow:hidden"><span style="position:absolute;left:-6px;top:1px">mw</span></div>
<div class="a" style="left:430.8px;top:752.0px;width:265.4px;height:20.0px;background:#ff2600"></div>
<div class="a td" style="left:703px;top:calc(727.25px + 20px);width:206px;text-align:center;">2025-04-08 23:13:03</div>
<div class="a td" style="left:909px;top:calc(727.25px + 20px);width:155px;text-align:center;">PVSC/USD</div>
<div class="a td" style="left:1064px;top:calc(727.25px + 20px);width:64px;text-align:center;color:#e74c3c;">平仓</div>
<div class="a td" style="left:1128px;top:calc(727.25px + 20px);width:64px;text-align:center;color:#18bc9c;">买涨</div>
<div class="a td" style="left:1192px;top:calc(727.25px + 20px);width:109px;text-align:center;">60</div>
<div class="a td" style="left:1301px;top:calc(727.25px + 20px);width:150px;text-align:center;">71.360000</div>
<div class="a td" style="left:1451px;top:calc(727.25px + 13px);width:117px;text-align:center;color:#3cb554;">71.3598</div>
<div class="a td" style="left:1568px;top:calc(727.25px + 13px);width:102px;text-align:center;color:#ff0000;">5000.0</div>
<div class="a td" style="left:1670px;top:calc(727.25px + 13px);width:143px;text-align:center;color:#ff0000;">0</div>
<div class="a td" style="left:1813px;top:calc(727.25px + 13px);width:141.5px;text-align:center;color:#ff0000;">5000.0</div>
<div class="a td" style="left:1954.5px;top:calc(727.25px + 13px);width:102.5px;text-align:center;color:#1f9a1f;">-500.00</div>
<div class="a td" style="left:2057px;top:calc(727.25px + 13px);width:103.5px;text-align:center;color:#ff0000;">4820.0</div>
<div class="a td" style="left:2160.5px;top:calc(727.25px + 20px);width:122.5px;text-align:center;">-</div>
<div class="a td lnk" style="left:2283px;top:calc(727.25px + 20px);width:103px;text-align:center"><span>默认</span></div>
<div class="a ubtn" style="left:2399px;top:calc(727.25px + 18px)"><svg width="18" height="14" viewBox="0 0 18 14" style="display:inline-block;vertical-align:0;margin-right:3px"><g fill="#fff"><rect x="0" y="0.00" width="3.24" height="2.59"/><rect x="4.68" y="0.00" width="13.32" height="2.59"/><rect x="0" y="3.50" width="3.24" height="2.59"/><rect x="4.68" y="3.50" width="13.32" height="2.59"/><rect x="0" y="7.00" width="3.24" height="2.59"/><rect x="4.68" y="7.00" width="13.32" height="2.59"/><rect x="0" y="10.50" width="3.24" height="2.59"/><rect x="4.68" y="10.50" width="13.32" height="2.59"/></g></svg>用户信息</div>
<div class="a" style="left:390px;top:793px;width:2125px;height:66px;background:#f9f9f9"></div>
<div class="a td" style="left:390px;top:calc(792.90px + 20px);width:36px;height:26px;overflow:hidden"><span style="position:absolute;left:-6px;top:1px">mw</span></div>
<div class="a" style="left:436.0px;top:812.2px;width:264.0px;height:23.8px;background:#ff2600"></div>
<div class="a td" style="left:703px;top:calc(792.90px + 20px);width:206px;text-align:center;">2025-04-08 23:12:46</div>
<div class="a td" style="left:909px;top:calc(792.90px + 20px);width:155px;text-align:center;">现货黄金</div>
<div class="a td" style="left:1064px;top:calc(792.90px + 20px);width:64px;text-align:center;color:#e74c3c;">平仓</div>
<div class="a td" style="left:1128px;top:calc(792.90px + 20px);width:64px;text-align:center;color:#e74c3c;">买跌</div>
<div class="a td" style="left:1192px;top:calc(792.90px + 20px);width:109px;text-align:center;">60</div>
<div class="a td" style="left:1301px;top:calc(792.90px + 20px);width:150px;text-align:center;">3019.640000</div>
<div class="a td" style="left:1451px;top:calc(792.90px + 13px);width:117px;text-align:center;color:#3cb554;">3019.6399</div>
<div class="a td" style="left:1568px;top:calc(792.90px + 13px);width:102px;text-align:center;color:#ff0000;">10000.0</div>
<div class="a td" style="left:1670px;top:calc(792.90px + 13px);width:143px;text-align:center;color:#ff0000;">0</div>
<div class="a td" style="left:1813px;top:calc(792.90px + 13px);width:141.5px;text-align:center;color:#ff0000;">10000.0</div>
<div class="a td" style="left:1954.5px;top:calc(792.90px + 13px);width:102.5px;text-align:center;color:#ff0000;">1000.00</div>
<div class="a td" style="left:2057px;top:calc(792.90px + 13px);width:103.5px;text-align:center;color:#ff0000;">9820.0</div>
<div class="a td" style="left:2160.5px;top:calc(792.90px + 20px);width:122.5px;text-align:center;">-</div>
<div class="a td lnk" style="left:2283px;top:calc(792.90px + 20px);width:103px;text-align:center"><span>默认</span></div>
<div class="a ubtn" style="left:2399px;top:calc(792.90px + 18px)"><svg width="18" height="14" viewBox="0 0 18 14" style="display:inline-block;vertical-align:0;margin-right:3px"><g fill="#fff"><rect x="0" y="0.00" width="3.24" height="2.59"/><rect x="4.68" y="0.00" width="13.32" height="2.59"/><rect x="0" y="3.50" width="3.24" height="2.59"/><rect x="4.68" y="3.50" width="13.32" height="2.59"/><rect x="0" y="7.00" width="3.24" height="2.59"/><rect x="4.68" y="7.00" width="13.32" height="2.59"/><rect x="0" y="10.50" width="3.24" height="2.59"/><rect x="4.68" y="10.50" width="13.32" height="2.59"/></g></svg>用户信息</div>
<div class="a td" style="left:390px;top:calc(858.55px + 20px);width:36px;height:26px;overflow:hidden"><span style="position:absolute;left:-6px;top:1px">mw</span></div>
<div class="a" style="left:436.0px;top:877.8px;width:267.8px;height:23.4px;background:#ff2600"></div>
<div class="a td" style="left:703px;top:calc(858.55px + 20px);width:206px;text-align:center;">2025-04-08 23:11:30</div>
<div class="a td" style="left:909px;top:calc(858.55px + 20px);width:155px;text-align:center;">现货黄金</div>
<div class="a td" style="left:1064px;top:calc(858.55px + 20px);width:64px;text-align:center;color:#e74c3c;">平仓</div>
<div class="a td" style="left:1128px;top:calc(858.55px + 20px);width:64px;text-align:center;color:#18bc9c;">买涨</div>
<div class="a td" style="left:1192px;top:calc(858.55px + 20px);width:109px;text-align:center;">60</div>
<div class="a td" style="left:1301px;top:calc(858.55px + 20px);width:150px;text-align:center;">3017.960000</div>
<div class="a td" style="left:1451px;top:calc(858.55px + 13px);width:117px;text-align:center;color:#ff0000;">3017.9601</div>
<div class="a td" style="left:1568px;top:calc(858.55px + 13px);width:102px;text-align:center;color:#ff0000;">10000.0</div>
<div class="a td" style="left:1670px;top:calc(858.55px + 13px);width:143px;text-align:center;color:#ff0000;">0</div>
<div class="a td" style="left:1813px;top:calc(858.55px + 13px);width:141.5px;text-align:center;color:#ff0000;">10000.0</div>
<div class="a td" style="left:1954.5px;top:calc(858.55px + 13px);width:102.5px;text-align:center;color:#ff0000;">1000.00</div>
<div class="a td" style="left:2057px;top:calc(858.55px + 13px);width:103.5px;text-align:center;color:#ff0000;">8820.0</div>
<div class="a td" style="left:2160.5px;top:calc(858.55px + 20px);width:122.5px;text-align:center;">-</div>
<div class="a td lnk" style="left:2283px;top:calc(858.55px + 20px);width:103px;text-align:center"><span>默认</span></div>
<div class="a ubtn" style="left:2399px;top:calc(858.55px + 18px)"><svg width="18" height="14" viewBox="0 0 18 14" style="display:inline-block;vertical-align:0;margin-right:3px"><g fill="#fff"><rect x="0" y="0.00" width="3.24" height="2.59"/><rect x="4.68" y="0.00" width="13.32" height="2.59"/><rect x="0" y="3.50" width="3.24" height="2.59"/><rect x="4.68" y="3.50" width="13.32" height="2.59"/><rect x="0" y="7.00" width="3.24" height="2.59"/><rect x="4.68" y="7.00" width="13.32" height="2.59"/><rect x="0" y="10.50" width="3.24" height="2.59"/><rect x="4.68" y="10.50" width="13.32" height="2.59"/></g></svg>用户信息</div>
<div class="a" style="left:426px;top:339px;width:1px;height:585px;background:rgba(0,0,0,0.045)"></div>
<div class="a" style="left:703px;top:339px;width:1px;height:585px;background:rgba(0,0,0,0.045)"></div>
<div class="a" style="left:909px;top:339px;width:1px;height:585px;background:rgba(0,0,0,0.045)"></div>
<div class="a" style="left:1064px;top:339px;width:1px;height:585px;background:rgba(0,0,0,0.045)"></div>
<div class="a" style="left:1128px;top:339px;width:1px;height:585px;background:rgba(0,0,0,0.045)"></div>
<div class="a" style="left:1192px;top:339px;width:1px;height:585px;background:rgba(0,0,0,0.045)"></div>
<div class="a" style="left:1301px;top:339px;width:1px;height:585px;background:rgba(0,0,0,0.045)"></div>
<div class="a" style="left:1451px;top:339px;width:1px;height:585px;background:rgba(0,0,0,0.045)"></div>
<div class="a" style="left:1568px;top:339px;width:1px;height:585px;background:rgba(0,0,0,0.045)"></div>
<div class="a" style="left:1670px;top:339px;width:1px;height:585px;background:rgba(0,0,0,0.045)"></div>
<div class="a" style="left:1813px;top:339px;width:1px;height:585px;background:rgba(0,0,0,0.045)"></div>
<div class="a" style="left:1954.5px;top:339px;width:1px;height:585px;background:rgba(0,0,0,0.045)"></div>
<div class="a" style="left:2057px;top:339px;width:1px;height:585px;background:rgba(0,0,0,0.045)"></div>
<div class="a" style="left:2160.5px;top:339px;width:1px;height:585px;background:rgba(0,0,0,0.045)"></div>
<div class="a" style="left:2283px;top:339px;width:1px;height:585px;background:rgba(0,0,0,0.045)"></div>
<div class="a" style="left:2386px;top:339px;width:1px;height:585px;background:rgba(0,0,0,0.045)"></div>
<div class="a" style="left:390px;top:398px;width:2125px;height:2px;background:#e8e8e8"></div>
<div class="a" style="left:390px;top:924px;width:2125px;height:24px;background:#f8f8f8"></div>
<div class="a" style="left:397px;top:931px;width:0;height:0;border-top:6.5px solid transparent;border-bottom:6.5px solid transparent;border-right:8px solid #505050"></div>
<div class="a" style="left:2500px;top:931px;width:0;height:0;border-top:6.5px solid transparent;border-bottom:6.5px solid transparent;border-left:8px solid #505050"></div>
<div class="a" style="left:594px;top:931px;width:1895px;height:13px;background:#8a8a8a;border-radius:7px"></div>
<div class="a foot" style="left:390px;top:976px">显示第 1 到第 8 条记录，总共 8 条记录</div>
</body>
</html>
